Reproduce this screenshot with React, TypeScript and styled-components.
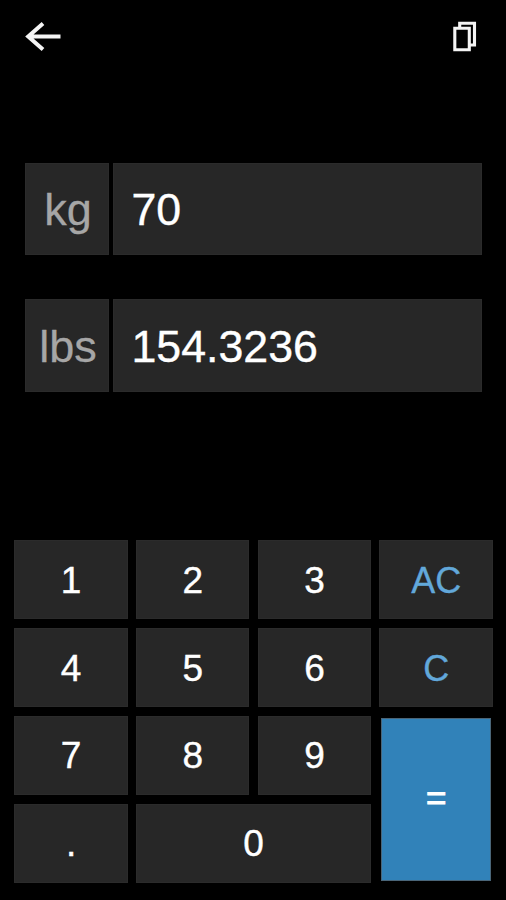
import React from "react";
import styled, { createGlobalStyle, css } from "styled-components";

const GlobalStyle = createGlobalStyle`
  html, body { margin: 0; background: #000; }
  * { box-sizing: border-box; }
`;

const Screen = styled.main`
  display: flex;
  flex-direction: column;
  width: 506px;
  height: 900px;
  overflow: hidden;
  background: #000;
  color: #fff;
  font-family: "Liberation Sans", Arial, sans-serif;
`;

const Toolbar = styled.header`
  display: flex;
  justify-content: space-between;
  align-items: center;
  height: 72px;
  padding: 0 28px 0 24px;
`;

const IconButton = styled.button`
  display: flex;
  padding: 0;
  border: 0;
  background: none;
  color: #f4f4f4;
`;

const Fields = styled.section`
  display: grid;
  row-gap: 44.3px;
  margin: 90.6px 24px 0 25px;
`;

const FieldRow = styled.div`
  display: grid;
  grid-template-columns: 84px 369px;
  column-gap: 4px;
  height: 92.5px;
`;

const Unit = styled.div`
  display: flex;
  align-items: center;
  justify-content: center;
  padding: 2px 0 0 2px;
  background: #272727;
  border: 1px solid #2b2b2b;
  color: #a6a6a6;
  font-size: 45px;
  -webkit-text-stroke: 0.3px currentColor;
`;

const Value = styled.div`
  display: flex;
  align-items: center;
  padding: 2px 0 0 17.5px;
  background: #272727;
  border: 1px solid #2b2b2b;
  font-size: 44.7px;
  -webkit-text-stroke: 0.4px currentColor;
`;

const Keypad = styled.section`
  display: grid;
  grid-template-columns: repeat(4, 113.4px);
  grid-template-rows: repeat(4, 79px);
  gap: 8.8px 8.3px;
  margin: 148.4px 0 0 14.4px;
`;

type Variant = "digit" | "action" | "equals";

const variants = {
  digit: css`
    padding-top: 2px;
    background: #272727;
    color: #fff;
    -webkit-text-stroke: 0.4px currentColor;
  `,
  action: css`
    padding-top: 2px;
    background: #272727;
    color: #62a8da;
    font-size: 36px;
    -webkit-text-stroke: 0.3px currentColor;
  `,
  equals: css`
    margin: 1.7px 1.5px 1.6px 1.5px;
    padding-bottom: 2px;
    background: #3182b9;
    border-color: #4a6578;
    color: #fff;
    font-size: 35px;
    -webkit-text-stroke: 1px currentColor;
  `,
};

const Key = styled.button<{ $variant: Variant; $cols: number; $rows: number }>`
  display: flex;
  align-items: center;
  justify-content: center;
  grid-column: span ${(p) => p.$cols};
  grid-row: span ${(p) => p.$rows};
  padding: 0;
  border: 1px solid #2b2b2b;
  font: 37px "Liberation Sans", Arial, sans-serif;
  ${(p) => variants[p.$variant]}
`;

const keys: { label: string; variant?: Variant; cols?: number; rows?: number }[] = [
  { label: "1" },
  { label: "2" },
  { label: "3" },
  { label: "AC", variant: "action" },
  { label: "4" },
  { label: "5" },
  { label: "6" },
  { label: "C", variant: "action" },
  { label: "7" },
  { label: "8" },
  { label: "9" },
  { label: "=", variant: "equals", rows: 2 },
  { label: "." },
  { label: "0", cols: 2 },
];

const fields = [
  { unit: "kg", value: "70" },
  { unit: "lbs", value: "154.3236" },
];

export default function App() {
  return (
    <>
      <GlobalStyle />
      <Screen>
        <Toolbar>
          <IconButton aria-label="Back">
            <svg width="38" height="32" viewBox="0 0 38 32" fill="none" stroke="currentColor" strokeWidth="4">
              <path d="M4 16.4H36.5M19 3.4L4.2 16.4L19 29.4" />
            </svg>
          </IconButton>
          <IconButton aria-label="Copy">
            <svg width="26" height="32" viewBox="0 0 26 32" fill="none" stroke="currentColor" strokeWidth="3.1">
              <path d="M7.7 7.5V3.2H22.5V25H18" />
              <path d="M2.8 8.3H17.3V29.8H2.8Z" />
            </svg>
          </IconButton>
        </Toolbar>
        <Fields>
          {fields.map((f) => (
            <FieldRow key={f.unit}>
              <Unit>{f.unit}</Unit>
              <Value>{f.value}</Value>
            </FieldRow>
          ))}
        </Fields>
        <Keypad>
          {keys.map((k) => (
            <Key key={k.label} $variant={k.variant ?? "digit"} $cols={k.cols ?? 1} $rows={k.rows ?? 1}>
              {k.label}
            </Key>
          ))}
        </Keypad>
      </Screen>
    </>
  );
}
